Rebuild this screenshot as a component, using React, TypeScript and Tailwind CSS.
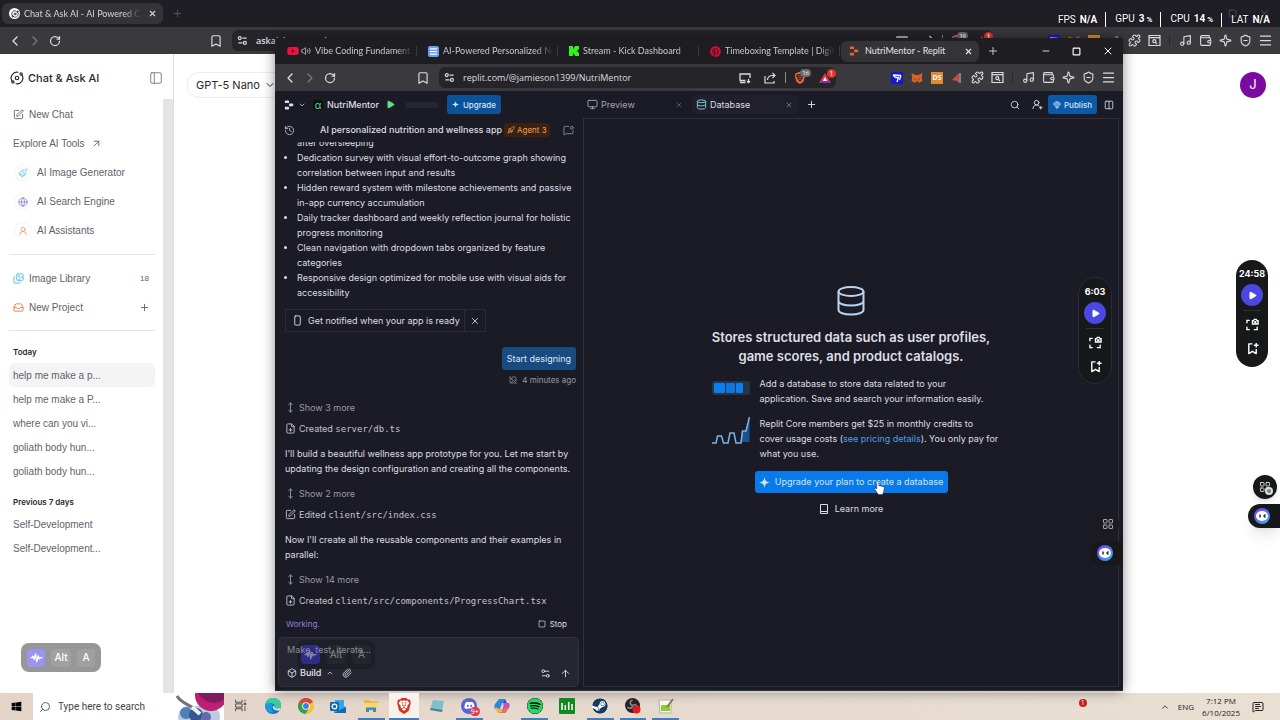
import type { ReactNode } from 'react';
import {
  ArrowUp, ArrowUpRight, Bookmark, Box, ChevronDown, ChevronLeft, ChevronRight, ChevronUp,
  Columns2, Database, FilePlus, Gem, Globe, History, ImageOff, Images, Inbox, LayoutGrid, Menu, MessageSquareDot,
  MessageSquareText, Minus, Monitor, MoveVertical, Music, Orbit, Paintbrush, PanelLeft, Paperclip, Play, Plus, Puzzle,
  RectangleVertical, RotateCw, Rocket, Search, Settings2, ShieldMinus, Sparkle, Square, SquarePen, UserRound,
  UserRoundPlus, Volume2, Wallet, X,
} from 'lucide-react';
import { FaDiscord, FaPinterest, FaSpotify, FaSteam, FaWindows, FaYoutube } from 'react-icons/fa';
import { SiBrave } from 'react-icons/si';

type BtnProps = { label: string; className?: string; children: ReactNode };

const IconBtn = ({ label, className = 'w-5', children }: BtnProps) => (
  <button type="button" aria-label={label} className={`flex shrink-0 items-center justify-center ${className}`}>
    {children}
  </button>
);

const ReplitMark = ({ className }: { className: string }) => (
  <svg viewBox="0 0 12 12" className={className} fill="currentColor" aria-hidden="true">
    <rect x="1" y="0.5" width="5" height="3.2" rx="0.8" />
    <rect x="6" y="4.3" width="5" height="3.2" rx="0.8" />
    <rect x="1" y="8.1" width="5" height="3.2" rx="0.8" />
  </svg>
);

const TuneIcon = () => (
  <svg viewBox="0 0 12 12" className="size-[11px] shrink-0" fill="none" stroke="currentColor" strokeWidth="1.3" aria-hidden="true">
    <circle cx="3" cy="3.4" r="1.6" />
    <path d="M6 3.4h4.5M1.5 8.6H6" />
    <circle cx="8.6" cy="8.6" r="1.6" />
  </svg>
);

const SparkIcon = ({ className }: { className: string }) => (
  <svg viewBox="0 0 12 12" className={className} fill="currentColor" aria-hidden="true">
    <path d="M6 0c.5 3.800 1.700 5.300 6 6-4.300.7-5.500 2.200-6 6-.5-3.800-1.700-5.300-6-6 4.300-.7 5.500-2.200 6-6z" />
  </svg>
);

const WaveIcon = ({ className }: { className: string }) => (
  <svg viewBox="0 0 14 12" className={className} fill="none" stroke="currentColor" strokeWidth="1.400" strokeLinecap="round" strokeLinejoin="round" aria-hidden="true">
    <path d="M1 6h1.200l1-1.500L4.500 8 6 2l1.200 8.500L8.800 4l1.200 3.500L11 6h2" />
  </svg>
);

/* ---------- browser chrome shared by both windows ---------- */

const Toolbar = ({ url, gap }: { url: string; gap: string }) => (
  <div className="flex h-[27px] shrink-0 items-stretch bg-[#3a393d] pr-[5px] pl-[5px] text-[#dcdce0]">
    <IconBtn label="Back"><ChevronLeft className="size-4" /></IconBtn>
    <IconBtn label="Forward"><ChevronRight className="size-4 text-[#77767b]" /></IconBtn>
    <IconBtn label="Reload"><RotateCw className="size-3" strokeWidth={2.5} /></IconBtn>
    <div className={gap} />
    <IconBtn label="Bookmark"><Bookmark className="size-[14px]" /></IconBtn>
    <div className="my-[3px] ml-[6px] flex min-w-0 flex-1 items-center gap-1 rounded-[6px] bg-[#252429] pl-[5px]">
      <TuneIcon />
      <label className="min-w-0 flex-1">
        <span className="sr-only">Address</span>
        <input readOnly defaultValue={url} className="block w-full bg-transparent px-1 text-[9px] leading-4 outline-none" />
      </label>
      <IconBtn label="Install">
        <svg viewBox="0 0 12 12" className="size-3" fill="none" stroke="currentColor" strokeWidth="1.300" aria-hidden="true">
          <path d="M11 6V2H1v6.500h5.500M1 10.500h5.500M9.500 7v3.500M8 9.200l1.500 1.500L11 9.200" />
        </svg>
      </IconBtn>
      <IconBtn label="Share" className="w-[22px]">
        <svg viewBox="0 0 12 12" className="size-3" fill="none" stroke="currentColor" strokeWidth="1.200" aria-hidden="true">
          <path d="M1 4v7h9V9M3.500 8c0-3 2-4.500 5-4.500h2.500M8.500 1L11 3.500 8.500 6" />
        </svg>
      </IconBtn>
      <span className="h-[11px] w-px bg-[#8b8a90]" />
      <IconBtn label="Shields" className="relative w-5">
        <SiBrave className="size-3 text-[#f0603a]" />
        <span className="absolute -top-[3px] -right-px rounded-full bg-[#6b6a70] px-[2px] text-[6px] leading-[8px] text-white">16</span>
      </IconBtn>
      <IconBtn label="Rewards" className="relative w-[22px]">
        <svg viewBox="0 0 12 12" className="size-3" aria-hidden="true">
          <path d="M6 1l6 10H0z" fill="#e5334b" />
          <path d="M0 11h12L6 7z" fill="#7b2fb5" />
          <path d="M6 5l2.200 4H3.800z" fill="#fff" />
        </svg>
        <span className="absolute -top-[3px] right-0 size-[9px] rounded-full bg-[#e2372f] text-[7px] leading-[9px] text-white">1</span>
      </IconBtn>
    </div>
    <div className="w-[51px]" />
    <IconBtn label="Cursor extension">
      <svg viewBox="0 0 12 12" className="size-3" aria-hidden="true">
        <path fill="#1a16cf" d="M0 0h12v12H0z" />
        <path d="M2 3l8 .5M2 3l2.500 2.500h3L6 10M10 3.500L8.500 8" fill="none" stroke="#fff" strokeWidth="1.300" />
      </svg>
    </IconBtn>
    <IconBtn label="Wallet fox">
      <svg viewBox="0 0 12 12" className="size-3" aria-hidden="true">
        <path d="M.5 1l4 2h3l4-2-.7 5 .7 3-3 1.500H3.500L.5 9l.7-3z" fill="#d9622b" />
        <path d="M3.500 7l1 .7M8.500 7l-1 .7M4.800 10h2.400" stroke="#3a1e10" />
      </svg>
    </IconBtn>
    <IconBtn label="DS extension">
      <span className="size-3 bg-[#e28a34] text-center text-[7px] leading-3 font-bold text-white">DS</span>
    </IconBtn>
    <IconBtn label="Video extension">
      <svg viewBox="0 0 12 12" className="size-3" aria-hidden="true">
        <path d="M1 8l5-5v6z" fill="#e0492b" />
        <path d="M6 3l2-2v10L6 9z" fill="#a35b48" />
        <path d="M9 1v10" stroke="#c9c9cd" />
      </svg>
    </IconBtn>
    <IconBtn label="Extensions"><Puzzle className="size-[13px]" /></IconBtn>
    <IconBtn label="Search tabs">
      <svg viewBox="0 0 13 13" className="size-[13px]" fill="none" stroke="currentColor" strokeWidth="1.200" aria-hidden="true">
        <path d="M1 1.500h11v10H1zM1 3.700h11" />
        <circle cx="6.300" cy="7.200" r="1.500" />
        <path d="M7.500 8.400L9 10" />
      </svg>
    </IconBtn>
    <span className="mx-[5px] my-2 w-px bg-[#2a292e]" />
    <IconBtn label="Playlist"><Music className="size-[13px]" /></IconBtn>
    <IconBtn label="Wallet"><Wallet className="size-[13px]" /></IconBtn>
    <IconBtn label="Assistant"><Sparkle className="size-[13px]" /></IconBtn>
    <IconBtn label="VPN"><ShieldMinus className="size-[13px]" /></IconBtn>
    <IconBtn label="Menu"><Menu className="size-[15px]" /></IconBtn>
  </div>
);

const fade = '[mask-image:linear-gradient(to_right,black_85%,transparent)]';

const BrowserTab = ({ icon, title }: { icon: ReactNode; title: string }) => (
  <button type="button" className="flex h-full w-[141px] shrink-0 items-center gap-1 pr-px pl-[10px] text-left text-[#c9c9cf]">
    {icon}
    <span className={`min-w-0 flex-1 overflow-hidden whitespace-nowrap ${fade}`}>{title}</span>
    <span className="h-[10px] w-px bg-[#3b3a40]" />
  </button>
);

/* ---------- page behind ---------- */

const tools = [
  { name: 'AI Image Generator', icon: <Paintbrush className="size-[10px] text-[#5cc4dc]" /> },
  { name: 'AI Search Engine', icon: <Globe className="size-[10px] text-[#8a86d8]" /> },
  { name: 'AI Assistants', icon: <UserRound className="size-[10px] text-[#f0995a]" /> },
];

const today = ['help me make a p...', 'help me make a P...', 'where can you vi...', 'goliath body hun...', 'goliath body hun...'];
const previous = ['Self-Development', 'Self-Development...'];

const Chat = ({ name, active }: { name: string; active?: boolean }) => (
  <a href="#chat" className={`flex h-6 items-center rounded-md pl-1 ${active ? 'bg-[#f4f4f5]' : ''}`}>{name}</a>
);

const Sidebar = () => (
  <aside className="flex w-[174px] shrink-0 border-r border-[#dedee0] font-['Liberation_Sans',sans-serif] text-[10px] text-[#62626a]">
    <div className="flex min-w-0 flex-1 flex-col">
      <div className="flex h-[45px] shrink-0 items-center pt-[3px] pl-[10px] text-[#27272a]">
        <Orbit className="mr-1 size-[14px]" />
        <span className="flex-1 font-[Inter,sans-serif] text-[11px] font-medium whitespace-nowrap">Chat &amp; Ask AI</span>
        <IconBtn label="Toggle sidebar" className="w-[14px] text-[#71717a]"><PanelLeft className="size-[14px]" strokeWidth={1.5} /></IconBtn>
      </div>
      <nav className="flex flex-col pt-px pr-2 pl-[9px]">
        <a href="#new" className="flex h-[29px] items-center gap-[5px] pl-1"><SquarePen className="size-[11px]" />New Chat</a>
        <a href="#tools" className="flex h-[29px] items-center gap-[6px] pl-1">Explore AI Tools<ArrowUpRight className="size-[11px]" /></a>
        {tools.map((t) => (
          <a key={t.name} href="#tool" className="flex h-[29px] items-center gap-[6px] pl-[5px]">
            <span className="flex size-[17px] items-center justify-center rounded-full border border-[#f4f4f5]">{t.icon}</span>
            {t.name}
          </a>
        ))}
        <hr className="my-[9px] border-[#e4e4e7]" />
        <a href="#library" className="flex h-[29px] items-center gap-[5px] px-1">
          <Images className="size-[11px] text-[#56bdd6]" />
          <span className="flex-1">Image Library</span>
          <span className="mr-[2px] text-[8px]">18</span>
        </a>
        <button type="button" className="flex h-[29px] items-center gap-[5px] px-1 text-left">
          <Inbox className="size-[11px] text-[#e08049]" />
          <span className="flex-1">New Project</span>
          <Plus className="mr-px size-[11px]" />
        </button>
        <hr className="mt-2 mb-[10px] border-[#e4e4e7]" />
        <h2 className="flex h-[22px] items-center pl-1 font-[Inter,sans-serif] text-[8px] font-semibold text-[#27272a]">Today</h2>
        {today.map((name, i) => <Chat key={i} name={name} active={i === 0} />)}
        <h2 className="mt-2 flex h-[21px] items-center pl-1 font-[Inter,sans-serif] text-[8px] font-semibold text-[#27272a]">Previous 7 days</h2>
        {previous.map((name) => <Chat key={name} name={name} />)}
      </nav>
    </div>
    <div className="mt-[45px] w-[10px] bg-[#e4e4e7]" />
  </aside>
);

const stats = [
  { name: 'FPS', value: 'N/A' },
  { name: 'GPU', value: '3', unit: '%' },
  { name: 'CPU', value: '14', unit: '%' },
  { name: 'LAT', value: 'N/A' },
];

/* FPS counter drawn over the title bar */
const Stats = () => (
  <dl className="absolute top-3 right-[10px] flex items-center gap-2 font-[Roboto,sans-serif] text-[10px] leading-[14px] text-white [text-shadow:0_0_2px_black]">
    {stats.map((s, i) => (
      <div key={s.name} className={`flex gap-1 ${i > 0 ? 'border-l border-white pl-[9px]' : ''}`}>
        <dt>{s.name}</dt>
        <dd className="font-bold">{s.value}{s.unit && <span className="ml-[2px] text-[8px]">{s.unit}</span>}</dd>
      </div>
    ))}
  </dl>
);

const BackWindow = () => (
  <div className="flex min-h-0 flex-1 flex-col bg-white">
    <div className="relative flex h-[27px] shrink-0 items-center bg-[#1f1e24] pl-[2px] font-[Lato,sans-serif] text-[9px] text-[#d6d6da]">
      <div className="flex h-[21px] w-[161px] items-center gap-1 rounded-md bg-[#343338] pr-[4px] pl-[7px]">
        <span className="flex size-[11px] items-center justify-center rounded-full bg-white"><Orbit className="size-2 text-black" /></span>
        <span className={`min-w-0 flex-1 overflow-hidden whitespace-nowrap ${fade}`}>Chat &amp; Ask AI - AI Powered Chat</span>
        <IconBtn label="Close tab" className="w-[14px]"><X className="size-[9px]" strokeWidth={3} /></IconBtn>
      </div>
      <IconBtn label="New tab" className="ml-1 w-5 text-[#5a595f]"><Plus className="size-[11px]" /></IconBtn>
      <div className="flex-1" />
      <IconBtn label="Restore" className="w-8 text-[#55545a]"><Square className="size-[9px]" /></IconBtn>
      <IconBtn label="Close window" className="w-8 text-[#55545a]"><X className="size-[11px]" /></IconBtn>
      <Stats />
    </div>
    <div className="font-['Open_Sans',sans-serif] font-semibold"><Toolbar url="askaichat.app/chat" gap="w-[141px]" /></div>
    <div className="flex min-h-0 flex-1 font-[Inter,sans-serif]">
      <Sidebar />
      <main className="flex flex-1 items-start justify-between pt-[18px] pr-[14px] pl-[13px]">
        <button type="button" className="flex h-[26px] w-[120px] items-center gap-1 rounded-xl border border-[#ececee] px-2 text-[11px] whitespace-nowrap text-[#27272a]">
          GPT-5 Nano<ChevronDown className="size-3" />
        </button>
        <button type="button" className="size-[26px] rounded-full bg-[#7b0aa3] text-[13px] text-white">J</button>
      </main>
    </div>
  </div>
);

/* ---------- replit window ---------- */

const features = [
  'Dedication survey with visual effort-to-outcome graph showing correlation between input and results',
  'Hidden reward system with milestone achievements and passive in-app currency accumulation',
  'Daily tracker dashboard and weekly reflection journal for holistic progress monitoring',
  'Clean navigation with dropdown tabs organized by feature categories',
  'Responsive design optimized for mobile use with visual aids for accessibility',
];

const ShowMore = ({ count }: { count: number }) => (
  <button type="button" className="flex h-[21px] shrink-0 items-center gap-[3px] text-[#9a9aa5]">
    <MoveVertical className="size-[11px]" />Show {count} more
  </button>
);

const FileRow = ({ verb, file }: { verb: 'Created' | 'Edited'; file: string }) => (
  <div className="flex h-[21px] shrink-0 items-center gap-[3px] whitespace-nowrap text-[#c3c3cc]">
    {verb === 'Created' ? <FilePlus className="size-[11px]" /> : <SquarePen className="size-[11px]" />}
    <span>{verb} <code className="font-['DejaVu_Sans_Mono',monospace] text-[9px]">{file}</code></span>
  </div>
);

const AgentPane = () => (
  <section className="flex w-[308px] shrink-0 flex-col">
    <div className="flex h-6 shrink-0 items-center pr-[9px] pl-[9px] whitespace-nowrap">
      <History className="size-[11px] text-[#b9b9c3]" />
      <h1 className="ml-[25px] font-medium">AI personalized nutrition and wellness app</h1>
      <span className="ml-[2px] flex h-[14px] items-center gap-[2px] rounded-[3px] bg-[#3b210f] px-[3px] text-[8px] text-[#f0a458]">
        <Rocket className="size-2" />Agent 3
      </span>
      <div className="flex-1" />
      <IconBtn label="New message" className="w-3 text-[#8b8b96]"><MessageSquareDot className="size-[11px]" /></IconBtn>
    </div>
    <div className="flex min-h-0 flex-1 flex-col overflow-hidden pr-[7px] pl-[10px] leading-[15px]">
      <ul className="-mt-[7px] shrink-0 list-disc pl-3">
        <li className="list-none">after oversleeping</li>
        {features.map((f) => <li key={f}>{f}</li>)}
      </ul>
      <div className="mt-[9px] flex h-[23px] shrink-0 items-center self-start border border-[#2b2b38]">
        <RectangleVertical className="ml-[6px] size-[11px]" />
        <span className="mr-[4px] ml-[5px]">Get notified when your app is ready</span>
        <IconBtn label="Dismiss" className="h-full w-[21px] border-l border-[#2b2b38]"><X className="size-[10px]" /></IconBtn>
      </div>
      <div className="mt-[15px] flex h-[23px] shrink-0 items-center self-end rounded-[3px] bg-[#194a80] px-[5px] text-[#dbe9f8]">Start designing</div>
      <div className="mt-[3px] mb-[10px] flex h-[14px] shrink-0 items-center gap-[5px] self-end text-[8px] text-[#9a9aa5]">
        <ImageOff className="size-2" />4 minutes ago
      </div>
      <ShowMore count={3} />
      <FileRow verb="Created" file="server/db.ts" />
      <p className="my-[7px] shrink-0">I'll build a beautiful wellness app prototype for you. Let me start by<br />updating the design configuration and creating all the components.</p>
      <ShowMore count={2} />
      <FileRow verb="Edited" file="client/src/index.css" />
      <p className="my-[7px] shrink-0">Now I'll create all the reusable components and their examples in<br />parallel:</p>
      <ShowMore count={14} />
      <FileRow verb="Created" file="client/src/components/ProgressChart.tsx" />
    </div>
    <div className="flex h-[26px] shrink-0 items-center justify-between pr-4 pl-[11px] text-[8px]">
      <span className="text-[#8f7fe0]">Working.</span>
      <button type="button" className="flex items-center gap-1"><Square className="size-2" />Stop</button>
    </div>
    <form className="relative mr-1 ml-[3px] flex h-[50px] shrink-0 flex-col rounded-[5px] border border-[#33333f] bg-[#252631] px-2">
      <label className="sr-only" htmlFor="prompt">Prompt</label>
      <input id="prompt" placeholder="Make, test, iterate..." className="relative z-10 mt-[2px] h-[18px] bg-transparent outline-none placeholder:text-[#8c8c98]" />
      <div className="flex flex-1 items-center pt-[2px]">
        <button type="button" className="flex items-center gap-[3px] font-medium text-[#e5e5ec]">
          <Box className="size-[10px]" />Build<ChevronUp className="ml-[2px] size-2" />
        </button>
        <IconBtn label="Attach" className="ml-[5px] w-4"><Paperclip className="size-[10px]" /></IconBtn>
        <div className="flex-1" />
        <IconBtn label="Options" className="w-5"><Settings2 className="size-[11px]" /></IconBtn>
        <IconBtn label="Send" className="-mr-[5px] w-5"><ArrowUp className="size-[11px]" /></IconBtn>
      </div>
      <div className="absolute top-[2px] left-[18px] flex h-[29px] items-center gap-[6px] rounded-lg bg-[#16171b]/50 px-1 text-[10px] text-[#a0a0a8]/80">
        <span className="flex size-[19px] items-center justify-center rounded bg-[#3532b0]/70"><WaveIcon className="w-[13px]" /></span>
        <span className="flex h-[19px] w-5 items-center justify-center rounded bg-[#2a2b33]/60">Alt</span>
        <span className="flex size-[19px] items-center justify-center rounded bg-[#2a2b33]/60">A</span>
      </div>
    </form>
  </section>
);

const DatabasePane = () => (
  <section className="flex min-w-0 flex-1 flex-col items-center border border-[#2f2f3d] pt-[167px]">
    <svg viewBox="0 0 28 30" className="h-[30px] w-7" fill="none" stroke="#b9d5f2" strokeWidth="2" aria-hidden="true">
      <ellipse cx="14" cy="5.500" rx="12.500" ry="4.500" />
      <path d="M1.500 5.500v18.500C1.500 26.500 7 28.500 14 28.500S26.500 26.500 26.500 24V5.500M1.500 15c0 2.500 5.500 4.500 12.500 4.500S26.500 17.500 26.500 15" />
    </svg>
    <h2 className="mt-3 text-center text-[13px] leading-[19px] font-semibold whitespace-nowrap">
      Stores structured data such as user profiles,<br />game scores, and product catalogs.
    </h2>
    <div className="mt-[10px] flex w-[279px] gap-[10px] leading-[15px] whitespace-nowrap">
      <svg viewBox="0 0 38 14" className="mt-[5px] h-[14px] w-[38px] shrink-0" aria-hidden="true">
        <rect width="38" height="14" rx="3" fill="#263449" />
        <rect x="2" y="2" width="11" height="10" rx="1" fill="#0a7ff0" />
        <rect x="14" y="2" width="9" height="10" rx="1" fill="#1075dc" />
        <rect x="24" y="2" width="7" height="10" rx="1" fill="#0a7ff0" />
      </svg>
      <p>Add a database to store data related to your<br />application. Save and search your information easily.</p>
    </div>
    <div className="mt-[10px] flex w-[279px] gap-[10px] leading-[15px] whitespace-nowrap">
      <svg viewBox="0 0 38 30" className="h-[30px] w-[38px] shrink-0" fill="none" aria-hidden="true">
        <path d="M30 15h4l3.500-13v24H28z" fill="#17538f" />
        <path d="M0 27h4l1.500-7h4l2 7h4.500l2-10h4l2 10h5l1.500-12H34l3.500-14" stroke="#7db2ea" strokeWidth="1.500" />
      </svg>
      <p>
        Replit Core members get $25 in monthly credits to<br />
        cover usage costs (<a href="#pricing" className="text-[#4c9ce8]">see pricing details</a>). You only pay for<br />
        what you use.
      </p>
    </div>
    <button type="button" className="relative mt-[10px] flex h-[22px] w-[193px] items-center justify-center gap-[5px] rounded-[3px] bg-[#0a7aea] whitespace-nowrap text-[#cfe5fc]">
      <SparkIcon className="size-[11px]" />Upgrade your plan to create a database
      <svg viewBox="0 0 12 16" className="absolute top-[9px] left-[119px] h-[15px] w-[11px]" aria-hidden="true">
        <path d="M4 1c1 0 1.300.6 1.300 1.300V6l4.500.8c1 .2 1.500.8 1.400 1.800L10.700 12l-1.200 3.500H4.500L1 10c-.5-1 .5-1.800 1.300-1.200L3 9.500V2.300C3 1.600 3.300 1 4 1z" fill="#fff" stroke="#222" strokeWidth=".6" />
      </svg>
    </button>
    <a href="#learn" className="mt-2 flex items-center gap-[6px] leading-4">
      <svg viewBox="0 0 10 10" className="size-[10px]" fill="none" stroke="currentColor" aria-hidden="true">
        <path d="M1.500.5h7v9h-7zM1.500 7.500h7" />
      </svg>
      Learn more
    </a>
  </section>
);

const ReplitApp = () => (
  <div className="flex min-h-0 flex-1 flex-col bg-[#1b1b25] font-[Inter,sans-serif] text-[9px] text-[#dedee5]">
    <header className="flex h-[27px] shrink-0 items-center whitespace-nowrap">
      <div className="flex w-[308px] shrink-0 items-center pl-[9px]">
        <button type="button" aria-label="Workspace menu" className="flex items-center gap-1">
          <ReplitMark className="size-[10px]" /><ChevronDown className="size-2" />
        </button>
        <span className="ml-[7px] flex size-[10px] items-center justify-center rounded-[2px] bg-[#07130c] text-[10px] leading-[10px] text-[#67d68b]">α</span>
        <span className="ml-1 font-medium">NutriMentor</span>
        <IconBtn label="Run" className="ml-1 w-4"><Play className="size-[9px] fill-[#5fe27d] text-[#5fe27d]" /></IconBtn>
        <span className="ml-[6px] h-[6px] w-[34px] rounded-sm bg-[#272733]" />
        <button type="button" className="ml-2 flex h-[19px] w-[54px] items-center justify-center gap-1 rounded-[3px] bg-[#0b5299] text-[8px] font-medium text-[#d5e6f8]">
          <SparkIcon className="size-[7px]" />Upgrade
        </button>
      </div>
      <button type="button" className="ml-1 flex w-[82px] items-center gap-[3px] text-[#a5a5b0]"><Monitor className="size-[11px]" />Preview</button>
      <IconBtn label="Close Preview" className="w-5 text-[#70707c]"><X className="size-2" /></IconBtn>
      <div className="ml-[3px] flex h-[19px] w-[106px] items-center rounded-[4px] bg-[#20202c] pr-1 pl-1">
        <Database className="size-[11px] text-[#8ed0dc]" />
        <span className="ml-[3px] flex-1">Database</span>
        <IconBtn label="Close Database" className="w-[10px] text-[#9a9aa5]"><X className="size-2" /></IconBtn>
      </div>
      <IconBtn label="Add tab" className="ml-[3px] w-5"><Plus className="size-[11px]" /></IconBtn>
      <div className="flex-1" />
      <IconBtn label="Search" className="w-[22px]"><Search className="size-[10px]" /></IconBtn>
      <IconBtn label="Invite" className="w-[22px]"><UserRoundPlus className="size-[11px]" /></IconBtn>
      <button type="button" className="mr-1 flex h-[19px] w-[49px] items-center justify-center gap-[3px] rounded-[3px] bg-[#0b5aa8] text-[8px] font-medium text-[#d5e6f8]">
        <Gem className="size-2" />Publish
      </button>
      <IconBtn label="Layout" className="mr-[6px] w-4"><Columns2 className="size-[10px]" /></IconBtn>
    </header>
    <div className="flex min-h-0 flex-1 pr-1 pb-[3px]">
      <AgentPane />
      <DatabasePane />
    </div>
  </div>
);

const FrontWindow = () => (
  <div className="absolute top-[38px] right-[157px] bottom-[29px] left-[275px] flex flex-col overflow-hidden border-b border-[#34333c] bg-[#1b1b25] shadow-[0_0_12px_rgba(0,0,0,0.45)]">
    <div className="flex h-[26px] shrink-0 items-center bg-[#1e1d21] pl-[2px] font-[Lato,sans-serif] text-[9px]">
      <BrowserTab
        title="Vibe Coding Fundamentals"
        icon={<span className="flex shrink-0 items-center gap-[2px]"><FaYoutube className="size-3 text-[#f2103c]" /><Volume2 className="size-[10px]" /></span>}
      />
      <BrowserTab title="AI-Powered Personalized Nutrition" icon={<span className="flex size-[11px] shrink-0 items-center justify-center rounded-[2px] bg-[#6a9ff5]"><Menu className="size-[9px] text-white" strokeWidth={3} /></span>} />
      <BrowserTab
        title="Stream - Kick Dashboard"
        icon={<svg viewBox="0 0 10 10" className="size-[10px]" aria-hidden="true"><path d="M0 0h4v2.500h1V1h1V0h4v3.500H9v1H8v1h1v1h1V10H6V9H5V7.500H4V10H0z" fill="#35f01e" /></svg>}
      />
      <BrowserTab title="Timeboxing Template | Digital" icon={<FaPinterest className="size-[11px] shrink-0 text-[#e00b35]" />} />
      <div className="flex h-[21px] w-[138px] shrink-0 items-center gap-[6px] rounded-md bg-[#343337] pr-1 pl-2 text-[#e6e6ea]">
        <ReplitMark className="size-[10px] text-[#e0642c]" />
        <span className="flex-1">NutriMentor - Replit</span>
        <IconBtn label="Close tab" className="w-[14px]"><X className="size-[9px]" strokeWidth={3} /></IconBtn>
      </div>
      <IconBtn label="New tab" className="ml-1 w-5 text-[#c9c9cf]"><Plus className="size-3" /></IconBtn>
      <div className="flex-1" />
      <IconBtn label="Minimize" className="w-[30px] text-white"><Minus className="size-[10px]" /></IconBtn>
      <IconBtn label="Maximize" className="w-[31px] text-white"><Square className="size-[9px]" strokeWidth={3} /></IconBtn>
      <IconBtn label="Close window" className="w-[31px] text-white"><X className="size-3" /></IconBtn>
    </div>
    <div className="font-['Open_Sans',sans-serif]"><Toolbar url="replit.com/@jamieson1399/NutriMentor" gap="w-[73px]" /></div>
    <ReplitApp />
  </div>
);

/* ---------- floating widgets ---------- */

const CaptureIcon = () => (
  <svg viewBox="0 0 14 14" className="size-[13px]" fill="none" stroke="currentColor" strokeWidth="1.500" strokeLinecap="round" aria-hidden="true">
    <path d="M1 5V2.500h2.500M1 10v2.500h2.500M9 12.500h3V10M7 3h1l1-1.500h2L12 3h1v3.500H7z" />
    <circle cx="10" cy="4.500" r=".6" />
  </svg>
);

const MarkIcon = () => (
  <svg viewBox="0 0 14 14" className="size-[13px]" fill="none" stroke="currentColor" strokeWidth="1.500" strokeLinejoin="round" aria-hidden="true">
    <path d="M7 2H3v10.500l4-2.500 4 2.500V7.500M11 1v5M8.500 3.500h5" />
  </svg>
);

const TimerPill = ({ time, className }: { time: string; className: string }) => (
  <div className={`absolute flex h-[107px] flex-col items-center rounded-full bg-[#17181a] pt-2 font-[Inter,sans-serif] text-white ${className}`}>
    <span className="text-[9px] leading-3 font-bold">{time}</span>
    <button type="button" aria-label="Play" className="mt-1 flex size-[22px] shrink-0 items-center justify-center rounded-full bg-[#4a48e0]">
      <Play className="size-[9px] fill-white" />
    </button>
    <span className="mt-1 h-px w-[18px] bg-[#303136]" />
    <IconBtn label="Capture" className="mt-[7px] w-5"><CaptureIcon /></IconBtn>
    <IconBtn label="Add bookmark" className="mt-[11px] w-5"><MarkIcon /></IconBtn>
  </div>
);

const Robot = () => (
  <svg viewBox="0 0 16 16" className="size-4" aria-hidden="true">
    <defs>
      <linearGradient id="ring" x1="0" y1="0" x2="1" y2="1">
        <stop offset="0" stopColor="#7a35e8" />
        <stop offset="1" stopColor="#35b6f0" />
      </linearGradient>
    </defs>
    <circle cx="8" cy="8" r="8" fill="url(#ring)" />
    <ellipse cx="8" cy="8" rx="6" ry="5" fill="#fff" />
    <path d="M6 6.500v3M11.500 6.500L10 8l1.500 1.500" stroke="#1c1440" strokeWidth="1.400" fill="none" />
  </svg>
);

const Widgets = () => (
  <>
    <TimerPill time="6:03" className="top-[277px] right-[168px] w-[34px] border border-[#2a2944]" />
    <TimerPill time="24:58" className="top-[260px] right-3 w-8" />
    <button type="button" aria-label="Apps" className="absolute top-[513px] right-[161px] flex size-[22px] items-center justify-center rounded-full bg-[#1a1a20] text-[#a4a4aa]">
      <LayoutGrid className="size-3" />
    </button>
    <button type="button" aria-label="Assistant" className="absolute top-[541px] right-[158px] flex h-6 w-8 items-center rounded-l-full bg-[#17171c] pl-[7px]"><Robot /></button>
    <button type="button" aria-label="Hide apps" className="absolute top-[475px] right-[3px] flex size-6 items-center justify-center rounded-full bg-[#17181a] text-[#cfcfd3] shadow-md">
      <LayoutGrid className="size-3" />
      <span className="absolute right-1 bottom-1 size-2 rounded-full border-2 border-[#dcdcdf] bg-[#808085]" />
    </button>
    <button type="button" aria-label="Open assistant" className="absolute top-[504px] right-0 flex h-6 w-8 items-center rounded-l-full bg-[#17181a] pl-[6px] shadow-lg"><Robot /></button>
    <div className="absolute bottom-12 left-[21px] flex h-[29px] items-center gap-[6px] rounded-lg bg-[#979797] px-[6px] font-[Inter,sans-serif] text-[10px] font-medium text-white">
      <span className="flex size-[18px] items-center justify-center rounded bg-[#9a94f0]"><WaveIcon className="w-[13px]" /></span>
      <span className="flex h-[18px] w-5 items-center justify-center rounded bg-[#a0a0a0]">Alt</span>
      <span className="flex size-[18px] items-center justify-center rounded bg-[#a0a0a0]">A</span>
    </div>
  </>
);

/* ---------- taskbar ---------- */

const apps: { name: string; open?: boolean; active?: boolean; icon: ReactNode }[] = [
  {
    name: 'Task View',
    icon: <svg viewBox="0 0 16 16" className="size-[13px]" fill="none" stroke="#333" aria-hidden="true"><path d="M2 1v3h8V1M2 15v-3h8v3M2 6h8v4H2zM13.500 1v2M13.500 9v6M12.500 5h2v2h-2z" /></svg>,
  },
  {
    name: 'Edge',
    icon: (
      <svg viewBox="0 0 16 16" className="size-4" aria-hidden="true">
        <circle cx="8" cy="8" r="8" fill="#1473c4" />
        <path d="M0 7C1 2.500 4 0 8 0c4.500 0 8 3 8 6.500 0 3-2 4-4.500 4-2 0-2.500-1-1.500-2 0-3-6-4.500-10-1.500z" fill="#3ccb9a" />
        <path d="M0 7c4-3.500 8-2 8 .5-2 1-2 5 1.500 6.500-5 2-9-1.500-9.500-7z" fill="#1c9ade" />
        <path d="M8 8c-1 3 2 5 6.500 4.500L16 9c-1 1-3 1.500-4.500 1.500S9 9.500 10 8.500z" fill="#e9dfd6" />
      </svg>
    ),
  },
  {
    name: 'Chrome',
    icon: (
      <svg viewBox="0 0 16 16" className="size-4" aria-hidden="true">
        <circle cx="8" cy="8" r="8" fill="#f7c325" />
        <path d="M8 8L1 4a8 8 0 0114 0z" fill="#dc4436" />
        <path d="M8 8L1 4a8 8 0 006.500 12L11 10z" fill="#2da14c" />
        <circle cx="8" cy="8" r="3.800" fill="#fff" />
        <circle cx="8" cy="8" r="2.900" fill="#3f7ee8" />
      </svg>
    ),
  },
  {
    name: 'Outlook',
    icon: (
      <svg viewBox="0 0 16 16" className="size-4" aria-hidden="true">
        <path d="M5 2h9v6l2 1v6H4z" fill="#31a5e7" />
        <path d="M4 15l12-6v6z" fill="#1567b3" />
        <rect y="4" width="9" height="9" rx="1" fill="#0f67b8" />
        <circle cx="4.500" cy="8.500" r="2.300" fill="none" stroke="#fff" strokeWidth="1.300" />
      </svg>
    ),
  },
  {
    name: 'Explorer', open: true,
    icon: (
      <svg viewBox="0 0 16 14" className="h-[14px] w-4" aria-hidden="true">
        <path d="M1 1h5l1.500 1.500H15V11H1z" fill="#e7b43d" />
        <path d="M1 4h14v8H1z" fill="#f8d775" />
        <path d="M3 13V8.500h10V13h-3v-2H6v2z" fill="#3b8bc8" />
      </svg>
    ),
  },
  {
    name: 'Brave', open: true, active: true,
    icon: (
      <span className="relative flex size-4 items-center justify-center">
        <span className="absolute inset-[3px] bg-white" />
        <SiBrave className="relative size-4 text-[#d8331f]" />
      </span>
    ),
  },
  {
    name: 'Notepad',
    icon: <svg viewBox="0 0 16 16" className="size-4" aria-hidden="true"><path d="M4 2l11 1-2 11L1 12z" fill="#7fc0cc" /><path d="M13 14L1 12l1-2 11.500 2z" fill="#53808c" /></svg>,
  },
  {
    name: 'Discord', open: true,
    icon: (
      <>
        <span className="flex size-4 items-center justify-center rounded-full bg-[#5662d8]"><FaDiscord className="size-[11px] text-white" /></span>
        <span className="absolute right-[3px] bottom-[2px] rounded-full bg-[#d83c50] px-px text-[7px] leading-[9px] text-white">9+</span>
      </>
    ),
  },
  {
    name: 'Copilot',
    icon: (
      <svg viewBox="0 0 16 16" className="size-4" aria-hidden="true">
        <path d="M5 1h6l1 4H8L6 11H2C0 11 0 9 1 6z" fill="#2c86d8" />
        <path d="M1 9l5 2h3l-1 4H5c-2 0-2-1-4-6z" fill="#e9b53c" />
        <path d="M11 15H5l3-1 2-9h4c2 0 2 2 1 5z" fill="#c453b8" />
        <path d="M11 1l2 4h-3L8 8z" fill="#3154c6" />
        <path d="M8 15l2-5h4l-1 3c-1 2-2 2-5 2z" fill="#f0714d" />
      </svg>
    ),
  },
  { name: 'Spotify', open: true, icon: <FaSpotify className="size-4 rounded-full bg-black text-[#25d865]" /> },
  {
    name: 'Monitor',
    icon: <svg viewBox="0 0 16 16" className="size-4" aria-hidden="true"><rect width="16" height="16" rx="1" fill="#10891f" /><path d="M3 5v7M6.300 7v5M9.700 4v8M13 6v6" stroke="#fff" strokeWidth="1.500" /></svg>,
  },
  { name: 'Steam', open: true, icon: <FaSteam className="size-4 rounded-full bg-white text-[#173a5e]" /> },
  {
    name: 'OBS', open: true,
    icon: (
      <svg viewBox="0 0 16 16" className="size-4" aria-hidden="true">
        <circle cx="7.500" cy="7.500" r="7.500" fill="#252429" />
        <path d="M7.500 7.500C4 6 5 3 7.500 2M7.500 7.500C7.500 11 4 11 2.500 9M7.500 7.500c3-2 5 0 5 2.500" stroke="#8a898e" fill="none" strokeWidth="1.500" />
        <circle cx="11.500" cy="11.500" r="4" fill="#e01b1b" />
      </svg>
    ),
  },
  {
    name: 'Notepad++', open: true,
    icon: <svg viewBox="0 0 16 16" className="size-4" aria-hidden="true"><path d="M1 2h12v13H2z" fill="#f5f8ec" stroke="#a9b89a" /><path d="M3 7h9v6H3z" fill="#8fcb36" /><path d="M15 1L9 9" stroke="#8a6a45" strokeWidth="1.500" /></svg>,
  },
];

const Taskbar = () => (
  <footer className="flex h-[27px] shrink-0 items-stretch bg-gradient-to-r from-[#e3d3c9] to-[#e9dfd3] font-['Open_Sans',sans-serif] text-[#222]">
    <IconBtn label="Start" className="w-[33px]"><FaWindows className="size-[11px] text-black" /></IconBtn>
    <div className="relative flex w-[191px] items-center overflow-hidden bg-white pl-[6px]">
      <label htmlFor="search" className="sr-only">Search</label>
      <Search className="size-3 -scale-x-100 text-[#333]" strokeWidth={1.5} />
      <input id="search" placeholder="Type here to search" className="ml-[7px] w-[110px] font-[Roboto,sans-serif] text-[10px] outline-none placeholder:text-[#444]" />
      <svg viewBox="0 0 48 27" className="absolute inset-y-0 right-0 h-full w-12" aria-hidden="true">
        <rect x="2" y="13" width="42" height="22" rx="11" fill="#8fa9cf" opacity=".6" />
        <circle cx="10" cy="20" r="6" fill="#4f7fb4" />
        <circle cx="20" cy="22" r="7" fill="#355490" />
        <circle cx="30" cy="24" r="5" fill="#5d6da8" />
        <circle cx="35" cy="2" r="16" fill="#bf1f72" />
        <path d="M22 0h26v6c-8 7-20 4-26-6z" fill="#7b1c5e" />
        <path d="M1 3c4 7 11 8 18 13" stroke="#77717f" strokeWidth="3" fill="none" />
        <path d="M16 14l8 7" stroke="#eef1f6" strokeWidth="4" />
      </svg>
    </div>
    <div className="grid w-[458px] grid-cols-14">
      {apps.map((a) => (
        <button
          key={a.name}
          type="button"
          aria-label={a.name}
          className={`relative flex items-center justify-center border-b-2 ${a.open ? 'border-[#3d7fc4]' : 'border-transparent'} ${a.active ? 'mx-px bg-[#f8f2ec]' : 'mx-[3px]'}`}
        >
          {a.icon}
        </button>
      ))}
    </div>
    <div className="flex flex-1 items-center justify-end pr-4 text-[8px]">
      <span className="mr-[72px] mb-2 size-2 rounded-full bg-[#c62020] text-center text-[7px] leading-2 text-white">1</span>
      <IconBtn label="Hidden icons" className="mr-[7px] w-3"><ChevronUp className="size-[10px]" /></IconBtn>
      <span>ENG</span>
      <time className="mr-3 ml-2 text-center leading-3">7:12 PM<br />6/10/2025</time>
      <IconBtn label="Notifications" className="w-3"><MessageSquareText className="size-3" /></IconBtn>
    </div>
  </footer>
);

export default function App() {
  return (
    <div className="relative flex h-screen w-full flex-col overflow-hidden bg-white">
      <BackWindow />
      <FrontWindow />
      <Widgets />
      <Taskbar />
    </div>
  );
}
